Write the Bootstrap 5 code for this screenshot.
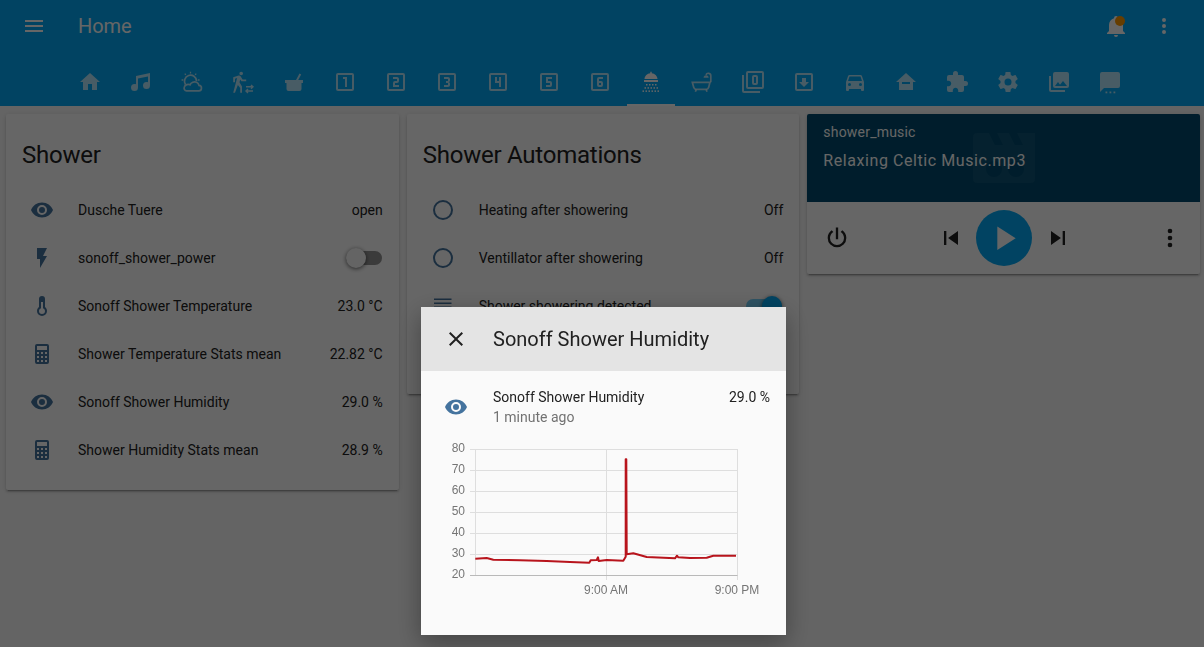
<!DOCTYPE html>
<html lang="en">
<head>
    <meta charset="UTF-8">
    <title>Home</title>
    <link href="https://cdn.jsdelivr.net/npm/bootstrap@5.3.3/dist/css/bootstrap.min.css" rel="stylesheet">
    <style>
        html, body { height: 100%; overflow: hidden; }
        body { background: #fafafa; font-family: Roboto, "Liberation Sans", sans-serif; font-size: 14px; color: #212121; }
        svg { display: block; fill: currentColor; }
        .ico { width: 24px; height: 24px; flex: none; }
        .ico-lg { width: 28px; height: 28px; flex: none; }

        .ha-top { background: #03a9f4; height: 106px; color: #fff; }
        .ha-bar { height: 52px; padding: 0 28px 0 22px; }
        .ha-title { font-size: 20px; margin-left: 32px; letter-spacing: -.1px; }
        .ha-bell { position: relative; margin-right: 24px; }
        .ha-dot { position: absolute; top: 2px; right: 3px; width: 10px; height: 10px; border-radius: 50%; background: #ff9800; }
        .ha-tabs { padding-left: 64px; height: 54px; }
        .ha-tab { width: 51px; height: 54px; color: rgba(255,255,255,.7); display: flex; align-items: center; justify-content: center; padding-top: 6px; position: relative; }
        .ha-tab.on { color: #fff; }
        .ha-tab.on::after { content: ""; position: absolute; left: 2px; width: 48px; bottom: 0; height: 2px; background: #fff; }

        .ha-cols { padding: 8px 4px 0 6px; gap: 8px; }
        .ha-col { flex: 1 1 0; min-width: 0; }
        .ha-card { border: 0; border-radius: 2px; background: #fff; box-shadow: 0 2px 2px rgba(0,0,0,.14), 0 1px 5px rgba(0,0,0,.12), 0 3px 1px -2px rgba(0,0,0,.2); }
        .ha-head { font-size: 24px; line-height: 32px; padding: 25px 16px 15px; letter-spacing: -.23px; }
        .ha-rows { padding: 0 16px 16px; }
        .ha-row { height: 48px; }
        .ha-badge { width: 40px; display: flex; justify-content: center; color: #44739e; margin-right: 16px; flex: none; }
        .ha-name { flex: 1 1 auto; }

        .ha-sw { width: 36px; height: 14px; border-radius: 7px; background: rgba(0,0,0,.42); position: relative; flex: none; margin-right: 1px; }
        .ha-sw i { position: absolute; top: -3px; left: 0; width: 20px; height: 20px; border-radius: 50%; background: #fafafa; box-shadow: 0 1px 4px rgba(0,0,0,.6); }
        .ha-sw.on { background: rgba(3,169,244,.55); }
        .ha-sw.on i { left: 16px; background: #03a9f4; }

        .ha-media { background: #004a6e; height: 88px; padding: 10px 16px; color: #fff; position: relative; overflow: hidden; }
        .ha-media-ico { position: absolute; left: 166px; top: 19px; width: 62px; height: 50px; color: rgba(255,255,255,.05); }
        .ha-media-name { position: relative; line-height: 17px; letter-spacing: .2px; }
        .ha-media-track { position: relative; font-size: 16px; line-height: 22px; margin-top: 9px; letter-spacing: .57px; }
        .ha-ctl { height: 72px; padding: 0 16px 0 16px; color: #212121; }
        .ha-ctl-mid { padding-left: 1px; }
        .ha-play { width: 56px; height: 56px; border-radius: 50%; background: #03a9f4; color: #fff; margin: 0 12px 0 11px; }

        .ha-scrim { position: fixed; inset: 0; background: rgba(0,0,0,.6); z-index: 10; }
        .ha-dialog { position: fixed; left: 421px; top: 307px; width: 365px; height: 328px; background: #fafafa; z-index: 11; box-shadow: 0 8px 24px rgba(0,0,0,.35); }
        .ha-dialog-top { background: #e4e4e4; height: 64px; padding-left: 23px; font-size: 20px; }
        .ha-dialog-title { margin-left: 25px; }
        .ha-more { padding: 16px 16px 0 11px; }
        .ha-more .ha-badge { width: 48px; margin-right: 13px; padding-top: 8px; }
        .ha-ago { color: #727272; }
        .ha-line { line-height: 20px; }
        .ha-chart { margin: 8px 0 0 9px; }
        .ha-chart text { font-family: "Liberation Sans", Arial, sans-serif; font-size: 12px; fill: #757575; }
    </style>
</head>
<body>

    <svg width="0" height="0" class="position-absolute">
        <defs>
            <symbol id="i-eye" viewBox="0 0 24 24"><path d="M12,9A3,3 0 0,0 9,12A3,3 0 0,0 12,15A3,3 0 0,0 15,12A3,3 0 0,0 12,9M12,17A5,5 0 0,1 7,12A5,5 0 0,1 12,7A5,5 0 0,1 17,12A5,5 0 0,1 12,17M12,4.5C7,4.5 2.73,7.61 1,12C2.73,16.39 7,19.5 12,19.5C17,19.5 21.27,16.39 23,12C21.27,7.61 17,4.5 12,4.5Z"/></symbol>
            <symbol id="i-calc" viewBox="0 0 24 24"><path d="M7,2H17A2,2 0 0,1 19,4V20A2,2 0 0,1 17,22H7A2,2 0 0,1 5,20V4A2,2 0 0,1 7,2M7,4V8H17V4H7M7,10V12H9V10H7M11,10V12H13V10H11M15,10V12H17V10H15M7,14V16H9V14H7M11,14V16H13V14H11M15,14V16H17V14H15M7,18V20H9V18H7M11,18V20H13V18H11M15,18V20H17V18H15Z"/></symbol>
            <symbol id="i-ring" viewBox="0 0 24 24"><path d="M12,20A8,8 0 0,1 4,12A8,8 0 0,1 12,4A8,8 0 0,1 20,12A8,8 0 0,1 12,20M12,2A10,10 0 0,0 2,12A10,10 0 0,0 12,22A10,10 0 0,0 22,12A10,10 0 0,0 12,2Z"/></symbol>
            <symbol id="i-dots" viewBox="0 0 24 24"><path d="M12,16A2,2 0 0,1 14,18A2,2 0 0,1 12,20A2,2 0 0,1 10,18A2,2 0 0,1 12,16M12,10A2,2 0 0,1 14,12A2,2 0 0,1 12,14A2,2 0 0,1 10,12A2,2 0 0,1 12,10M12,4A2,2 0 0,1 14,6A2,2 0 0,1 12,8A2,2 0 0,1 10,6A2,2 0 0,1 12,4Z"/></symbol>
        </defs>
    </svg>

    <!-- Cabecera con pestañas -->
    <header class="ha-top">
        <div class="ha-bar d-flex align-items-center">
            <svg class="ico" viewBox="0 0 24 24"><path d="M3,6H21V8H3V6M3,11H21V13H3V11M3,16H21V18H3V16Z"/></svg>
            <div class="ha-title flex-grow-1">Home</div>
            <div class="ha-bell">
                <svg class="ico" viewBox="0 0 24 24"><path d="M21,19V20H3V19L5,17V11C5,7.9 7.03,5.17 10,4.29C10,4.19 10,4.1 10,4A2,2 0 0,1 12,2A2,2 0 0,1 14,4C14,4.1 14,4.19 14,4.29C16.97,5.17 19,7.9 19,11V17L21,19M14,21A2,2 0 0,1 12,23A2,2 0 0,1 10,21"/></svg>
                <span class="ha-dot"></span>
            </div>
            <svg class="ico" viewBox="0 0 24 24"><use href="#i-dots"/></svg>
        </div>
        <nav class="ha-tabs d-flex" id="tabs"></nav>
    </header>

    <!-- Tarjetas -->
    <main class="ha-cols d-flex align-items-start">
        <div class="ha-col card ha-card">
            <div class="ha-head">Shower</div>
            <div class="ha-rows">
                <div class="ha-row d-flex align-items-center"><span class="ha-badge"><svg class="ico" viewBox="0 0 24 24"><use href="#i-eye"/></svg></span><span class="ha-name">Dusche Tuere</span><span>open</span></div>
                <div class="ha-row d-flex align-items-center"><span class="ha-badge"><svg class="ico" viewBox="0 0 24 24"><path d="M7,2V13H10V22L17,10H13L17,2H7Z"/></svg></span><span class="ha-name">sonoff_shower_power</span><span class="ha-sw"><i></i></span></div>
                <div class="ha-row d-flex align-items-center"><span class="ha-badge"><svg class="ico" viewBox="0 0 24 24"><path d="M17,17A5,5 0 0,1 12,22A5,5 0 0,1 7,17C7,15.36 7.79,13.91 9,13V5A3,3 0 0,1 12,2A3,3 0 0,1 15,5V13C16.21,13.91 17,15.36 17,17M11,8V14.17C9.83,14.58 9,15.69 9,17A3,3 0 0,0 12,20A3,3 0 0,0 15,17C15,15.69 14.17,14.58 13,14.17V8H11Z"/></svg></span><span class="ha-name">Sonoff Shower Temperature</span><span>23.0 °C</span></div>
                <div class="ha-row d-flex align-items-center"><span class="ha-badge"><svg class="ico" viewBox="0 0 24 24"><use href="#i-calc"/></svg></span><span class="ha-name">Shower Temperature Stats mean</span><span>22.82 °C</span></div>
                <div class="ha-row d-flex align-items-center"><span class="ha-badge"><svg class="ico" viewBox="0 0 24 24"><use href="#i-eye"/></svg></span><span class="ha-name">Sonoff Shower Humidity</span><span>29.0 %</span></div>
                <div class="ha-row d-flex align-items-center"><span class="ha-badge"><svg class="ico" viewBox="0 0 24 24"><use href="#i-calc"/></svg></span><span class="ha-name">Shower Humidity Stats mean</span><span>28.9 %</span></div>
            </div>
        </div>

        <div class="ha-col card ha-card">
            <div class="ha-head">Shower Automations</div>
            <div class="ha-rows">
                <div class="ha-row d-flex align-items-center"><span class="ha-badge"><svg class="ico" viewBox="0 0 24 24"><use href="#i-ring"/></svg></span><span class="ha-name">Heating after showering</span><span>Off</span></div>
                <div class="ha-row d-flex align-items-center"><span class="ha-badge"><svg class="ico" viewBox="0 0 24 24"><use href="#i-ring"/></svg></span><span class="ha-name">Ventillator after showering</span><span>Off</span></div>
                <div class="ha-row d-flex align-items-center"><span class="ha-badge"><svg class="ico" viewBox="0 0 24 24"><path d="M3,4.5H20.5V6H3ZM3,8.5H20.5V10H3ZM3,12.5H20.5V14H3ZM3,16.5H20.5V18H3Z"/></svg></span><span class="ha-name">Shower showering detected</span><span class="ha-sw on"><i></i></span></div>
                <div class="ha-row"></div>
            </div>
        </div>

        <div class="ha-col card ha-card overflow-hidden">
            <div class="ha-media">
                <svg class="ha-media-ico" viewBox="0 0 62 50"><path fill-rule="evenodd" d="M4,0H16L22,12H30L24,0H36L42,12H50L44,0H62V46A4,4 0 0,1 58,50H4A4,4 0 0,1 0,46V4A4,4 0 0,1 4,0ZM21,28A8,8 0 1,0 21,44A8,8 0 1,0 21,28ZM43,28A8,8 0 1,0 43,44A8,8 0 1,0 43,28Z"/></svg>
                <div class="ha-media-name">shower_music</div>
                <div class="ha-media-track">Relaxing Celtic Music.mp3</div>
            </div>
            <div class="ha-ctl d-flex align-items-center">
                <svg class="ico-lg" viewBox="0 0 24 24"><path d="M16.56,5.44L15.11,6.89C16.84,7.94 18,9.83 18,12A6,6 0 0,1 12,18A6,6 0 0,1 6,12C6,9.83 7.16,7.94 8.88,6.88L7.44,5.44C5.36,6.88 4,9.28 4,12A8,8 0 0,0 12,20A8,8 0 0,0 20,12C20,9.28 18.64,6.88 16.56,5.44M13,3H11V13H13"/></svg>
                <div class="ha-ctl-mid flex-grow-1 d-flex align-items-center justify-content-center">
                    <svg class="ico-lg" viewBox="0 0 24 24"><path d="M6,18V6H8V18H6M9.5,12L18,6V18L9.5,12Z"/></svg>
                    <span class="ha-play d-flex align-items-center justify-content-center"><svg width="40" height="40" viewBox="0 0 24 24"><path d="M8,5.14V19.14L19,12.14L8,5.14Z"/></svg></span>
                    <svg class="ico-lg" viewBox="0 0 24 24"><path d="M16,18H18V6H16M6,18L14.5,12L6,6V18Z"/></svg>
                </div>
                <svg class="ico-lg" viewBox="0 0 24 24"><use href="#i-dots"/></svg>
            </div>
        </div>
    </main>

    <div class="ha-scrim"></div>

    <!-- Diálogo de detalle -->
    <section class="ha-dialog">
        <div class="ha-dialog-top d-flex align-items-center">
            <svg class="ico" viewBox="0 0 24 24"><path d="M19,6.41L17.59,5L12,10.59L6.41,5L5,6.41L10.59,12L5,17.59L6.41,19L12,13.41L17.59,19L19,17.59L13.41,12L19,6.41Z"/></svg>
            <div class="ha-dialog-title">Sonoff Shower Humidity</div>
        </div>
        <div class="ha-more d-flex">
            <span class="ha-badge"><svg class="ico" viewBox="0 0 24 24"><use href="#i-eye"/></svg></span>
            <div class="flex-grow-1">
                <div class="d-flex justify-content-between ha-line"><span>Sonoff Shower Humidity</span><span>29.0 %</span></div>
                <div class="ha-ago ha-line">1 minute ago</div>
            </div>
        </div>
        <div class="ha-chart">
            <svg width="350" height="170" viewBox="430 435 350 170">
                <g stroke="#dedede" stroke-width="1" fill="none">
                    <path d="M470 449.5H737M470 470.5H737M470 491.5H737M470 512.5H737M470 533.5H737M470 554.5H737"/>
                    <path d="M475.5 449V575M606.5 449V580M737.5 449V580"/>
                </g>
                <path d="M470 575.5H737.5" stroke="#b9b9b9" fill="none"/>
                <g text-anchor="end">
                    <text x="465" y="452">80</text><text x="465" y="473">70</text><text x="465" y="494">60</text><text x="465" y="515">50</text><text x="465" y="536">40</text><text x="465" y="557">30</text><text x="465" y="578">20</text>
                </g>
                <g text-anchor="middle">
                    <text x="606" y="594">9:00 AM</text><text x="737" y="594">9:00 PM</text>
                </g>
                <path fill="none" stroke="#b8141c" stroke-width="2" stroke-linejoin="round" d="M475.3 558.7L486.7 558L493.3 559.7L520 560.3L546.7 561L570 562L589.3 562.7L590.7 560.3L596.7 560L598 557.3L598.7 561L606.7 560L623.3 560.7L625.7 556.7L625.7 459.3L626.3 459.3L626.7 554.3L633.3 553.3L646.7 557L675 558.3L677 555.7L678.3 557.3L690 558L706.7 557.7L713.3 555.7L736 555.7"/>
            </svg>
        </div>
    </section>

    <script>
        // Iconos de las pestañas (trazos mdi)
        const box = 'M19,19H5V5H19M19,3H5A2,2 0 0,0 3,5V19A2,2 0 0,0 5,21H19A2,2 0 0,0 21,19V5A2,2 0 0,0 19,3Z';
        const p = d => `<path d="${d}"/>`;
        const tabs = [
            p('M10,20V14H14V20H19V12H22L12,3L2,12H5V20H10Z'),
            p('M21,3V15.5A3.5,3.5 0 0,1 17.5,19A3.5,3.5 0 0,1 14,15.5A3.5,3.5 0 0,1 17.5,12C18.04,12 18.55,12.12 19,12.34V6.47L9,8.6V17.5A3.5,3.5 0 0,1 5.5,21A3.5,3.5 0 0,1 2,17.5A3.5,3.5 0 0,1 5.5,14C6.04,14 6.55,14.12 7,14.34V6L21,3Z'),
            `<g fill="none" stroke="currentColor" stroke-width="1.7"><path d="M6.5 20.8H18.5a2.7 2.7 0 0 0 .5-5.4C18.3 12.5 15.5 11.2 12.8 12.3C11.5 12.8 10.5 13.7 10 14.8C8.5 13.8 5 14.5 4.4 16.8C3.5 19 4.8 20.8 6.5 20.8Z"/><path d="M5.5 14.5A6 6 0 1 1 16.5 11"/><path d="M10.5 1.8v1.8M4.8 3.6l1 1.3M16.2 3.6l-1 1.3M1.6 10h1.8M19.6 10h-1.8" stroke-width="1.3"/></g>`,
            `<g transform="translate(-3.8 1.6) scale(1 .96)">${p('M14.12,10H19V8.2H15.38L13.38,4.87C13.08,4.37 12.54,4.03 11.92,4.03C11.74,4.03 11.58,4.06 11.42,4.11L6,5.8V11H7.8V7.33L9.91,6.67L6,22H7.8L10.67,13.89L13,17V22H14.8V15.59L12.31,11.05L13.04,8.18M14,3.8C15,3.8 15.8,3 15.8,2C15.8,1 15,0.2 14,0.2C13,0.2 12.2,1 12.2,2C12.2,3 13,3.8 14,3.8Z')}</g><g fill="none" stroke="currentColor" stroke-width="1.4"><path d="M15 16.8H22M20 14.9L22 16.8L20 18.7"/><path d="M22 21H15M17 19.1L15 21L17 22.9"/></g>`,
            p('M3,10H21V13H19.5V19A2,2 0 0,1 17.5,21H6.5A2,2 0 0,1 4.5,19V13H3ZM14,10L17.5,3.5L19.2,4.4L16.2,10Z'),
            p('M14,17H12V9H10V7H14') + p(box),
            p('M15,15H11V13H13A2,2 0 0,0 15,11V9C15,7.89 14.1,7 13,7H9V9H13V11H11A2,2 0 0,0 9,13V17H15') + p(box),
            p('M15,15V13.5A1.5,1.5 0 0,0 13.5,12A1.5,1.5 0 0,0 15,10.5V9C15,7.89 14.1,7 13,7H9V9H13V11H11V13H13V15H9V17H13C14.1,17 15,16.1 15,15') + p(box),
            p('M13,17H15V7H13V11H11V7H9V13H13') + p(box),
            p('M9,17H13A2,2 0 0,0 15,15V13A2,2 0 0,0 13,11H11V9H15V7H9V13H13V15H9') + p(box),
            `<path fill-rule="evenodd" d="M11,13H13V15H11ZM11,17H13A2,2 0 0,0 15,15V13A2,2 0 0,0 13,11H11V9H15V7H11A2,2 0 0,0 9,9V15A2,2 0 0,0 11,17Z"/>` + p(box),
            p('M11.3,1.8H12.7V3.3C16,3.6 18.2,6 18.5,9H5.5C5.8,6 8,3.6 11.3,3.3ZM5,10H19V12H5Z') + [[7,14],[10,14],[13,14],[16,14],[5.5,17.2],[8.5,17.2],[11.5,17.2],[14.5,17.2],[17.5,17.2],[3.5,20.4],[6.5,20.4],[9.5,20.4],[12.5,20.4],[15.5,20.4],[18.5,20.4]].map(c => `<rect x="${c[0]}" y="${c[1]}" width="1.5" height="1.5"/>`).join(''),
            `<g fill="none" stroke="currentColor" stroke-width="1.7"><path d="M2.3 12.3H20L18.6 17.6A2.5 2.5 0 0 1 16.2 19.4H6.2A2.5 2.5 0 0 1 3.8 17.6Z"/><path d="M6.2 19.4L5.4 21.8M16.2 19.4L17 21.8"/><path d="M20.8 12.3V5.8A2.5 2.5 0 0 0 16 4.8"/></g>` + p('M13.6,7.8H18.6A2.5,2.5 0 0,0 13.6,7.8Z'),
            p('M21,17H7V3H21M21,1H7A2,2 0 0,0 5,3V17A2,2 0 0,0 7,19H21A2,2 0 0,0 23,17V3A2,2 0 0,0 21,1M3,5H1V21A2,2 0 0,0 3,23H19V21H3M15,5H13A2,2 0 0,0 11,7V13A2,2 0 0,0 13,15H15A2,2 0 0,0 17,13V7A2,2 0 0,0 15,5M15,13H13V7H15V13Z'),
            p('M19,3H5A2,2 0 0,0 3,5V19A2,2 0 0,0 5,21H19A2,2 0 0,0 21,19V5A2,2 0 0,0 19,3M19,19H5V5H19V19M12,17L7,12H10V8H14V12H17L12,17Z'),
            p('M5,11L6.5,6.5H17.5L19,11M17.5,16A1.5,1.5 0 0,1 16,14.5A1.5,1.5 0 0,1 17.5,13A1.5,1.5 0 0,1 19,14.5A1.5,1.5 0 0,1 17.5,16M6.5,16A1.5,1.5 0 0,1 5,14.5A1.5,1.5 0 0,1 6.5,13A1.5,1.5 0 0,1 8,14.5A1.5,1.5 0 0,1 6.5,16M18.92,6C18.72,5.42 18.16,5 17.5,5H6.5C5.84,5 5.28,5.42 5.08,6L3,12V20A1,1 0 0,0 4,21H5A1,1 0 0,0 6,20V19H18V20A1,1 0 0,0 19,21H20A1,1 0 0,0 21,20V12L18.92,6Z'),
            `<path fill-rule="evenodd" d="M12,3L2,12H5V20H19V12H22L12,3ZM8,12H16V14H8Z"/>`,
            p('M20.5,11H19V7C19,5.89 18.1,5 17,5H13V3.5A2.5,2.5 0 0,0 10.5,1A2.5,2.5 0 0,0 8,3.5V5H4A2,2 0 0,0 2,7V10.8H3.5C5,10.8 6.2,12 6.2,13.5C6.2,15 5,16.2 3.5,16.2H2V20A2,2 0 0,0 4,22H7.8V20.5C7.8,19 9,17.8 10.5,17.8C12,17.8 13.2,19 13.2,20.5V22H17A2,2 0 0,0 19,20V16H20.5A2.5,2.5 0 0,0 23,13.5A2.5,2.5 0 0,0 20.5,11Z'),
            p('M12,15.5A3.5,3.5 0 0,1 8.5,12A3.5,3.5 0 0,1 12,8.5A3.5,3.5 0 0,1 15.5,12A3.5,3.5 0 0,1 12,15.5M19.43,12.97C19.47,12.65 19.5,12.33 19.5,12C19.5,11.67 19.47,11.34 19.43,11L21.54,9.37C21.73,9.22 21.78,8.95 21.66,8.73L19.66,5.27C19.54,5.05 19.27,4.96 19.05,5.05L16.56,6.05C16.04,5.66 15.5,5.32 14.87,5.07L14.5,2.42C14.46,2.18 14.25,2 14,2H10C9.75,2 9.54,2.18 9.5,2.42L9.13,5.07C8.5,5.32 7.96,5.66 7.44,6.05L4.95,5.05C4.73,4.96 4.46,5.05 4.34,5.27L2.34,8.73C2.21,8.95 2.27,9.22 2.46,9.37L4.57,11C4.53,11.34 4.5,11.67 4.5,12C4.5,12.33 4.53,12.65 4.57,12.97L2.46,14.63C2.27,14.78 2.21,15.05 2.34,15.27L4.34,18.73C4.46,18.95 4.73,19.03 4.95,18.95L7.44,17.94C7.96,18.34 8.5,18.68 9.13,18.93L9.5,21.58C9.54,21.82 9.75,22 10,22H14C14.25,22 14.46,21.82 14.5,21.58L14.87,18.93C15.5,18.67 16.04,18.34 16.56,17.94L19.05,18.95C19.27,19.03 19.54,18.95 19.66,18.73L21.66,15.27C21.78,15.05 21.73,14.78 21.54,14.63L19.43,12.97Z'),
            p('M22,16V4A2,2 0 0,0 20,2H8A2,2 0 0,0 6,4V16A2,2 0 0,0 8,18H20A2,2 0 0,0 22,16M11,12L13.03,14.71L16,11L20,16H8M2,6V20A2,2 0 0,0 4,22H18V20H4V6'),
            p('M4,2H20A2,2 0 0,1 22,4V16A2,2 0 0,1 20,18H6L2,22V4A2,2 0 0,1 4,2Z') + '<rect x="7.5" y="21.5" width="1.8" height="1.8"/><rect x="11.5" y="21.5" width="1.8" height="1.8"/><rect x="15.5" y="21.5" width="1.8" height="1.8"/>'
        ];
        const nav = document.getElementById('tabs');
        tabs.forEach((icono, i) => {
            const tab = document.createElement('a');
            tab.className = 'ha-tab' + (i === 11 ? ' on' : '');
            tab.innerHTML = `<svg class="ico" viewBox="0 0 24 24">${icono}</svg>`;
            nav.appendChild(tab);
        });
    </script>
    <script src="https://cdn.jsdelivr.net/npm/bootstrap@5.3.3/dist/js/bootstrap.bundle.min.js"></script>
</body>
</html>
